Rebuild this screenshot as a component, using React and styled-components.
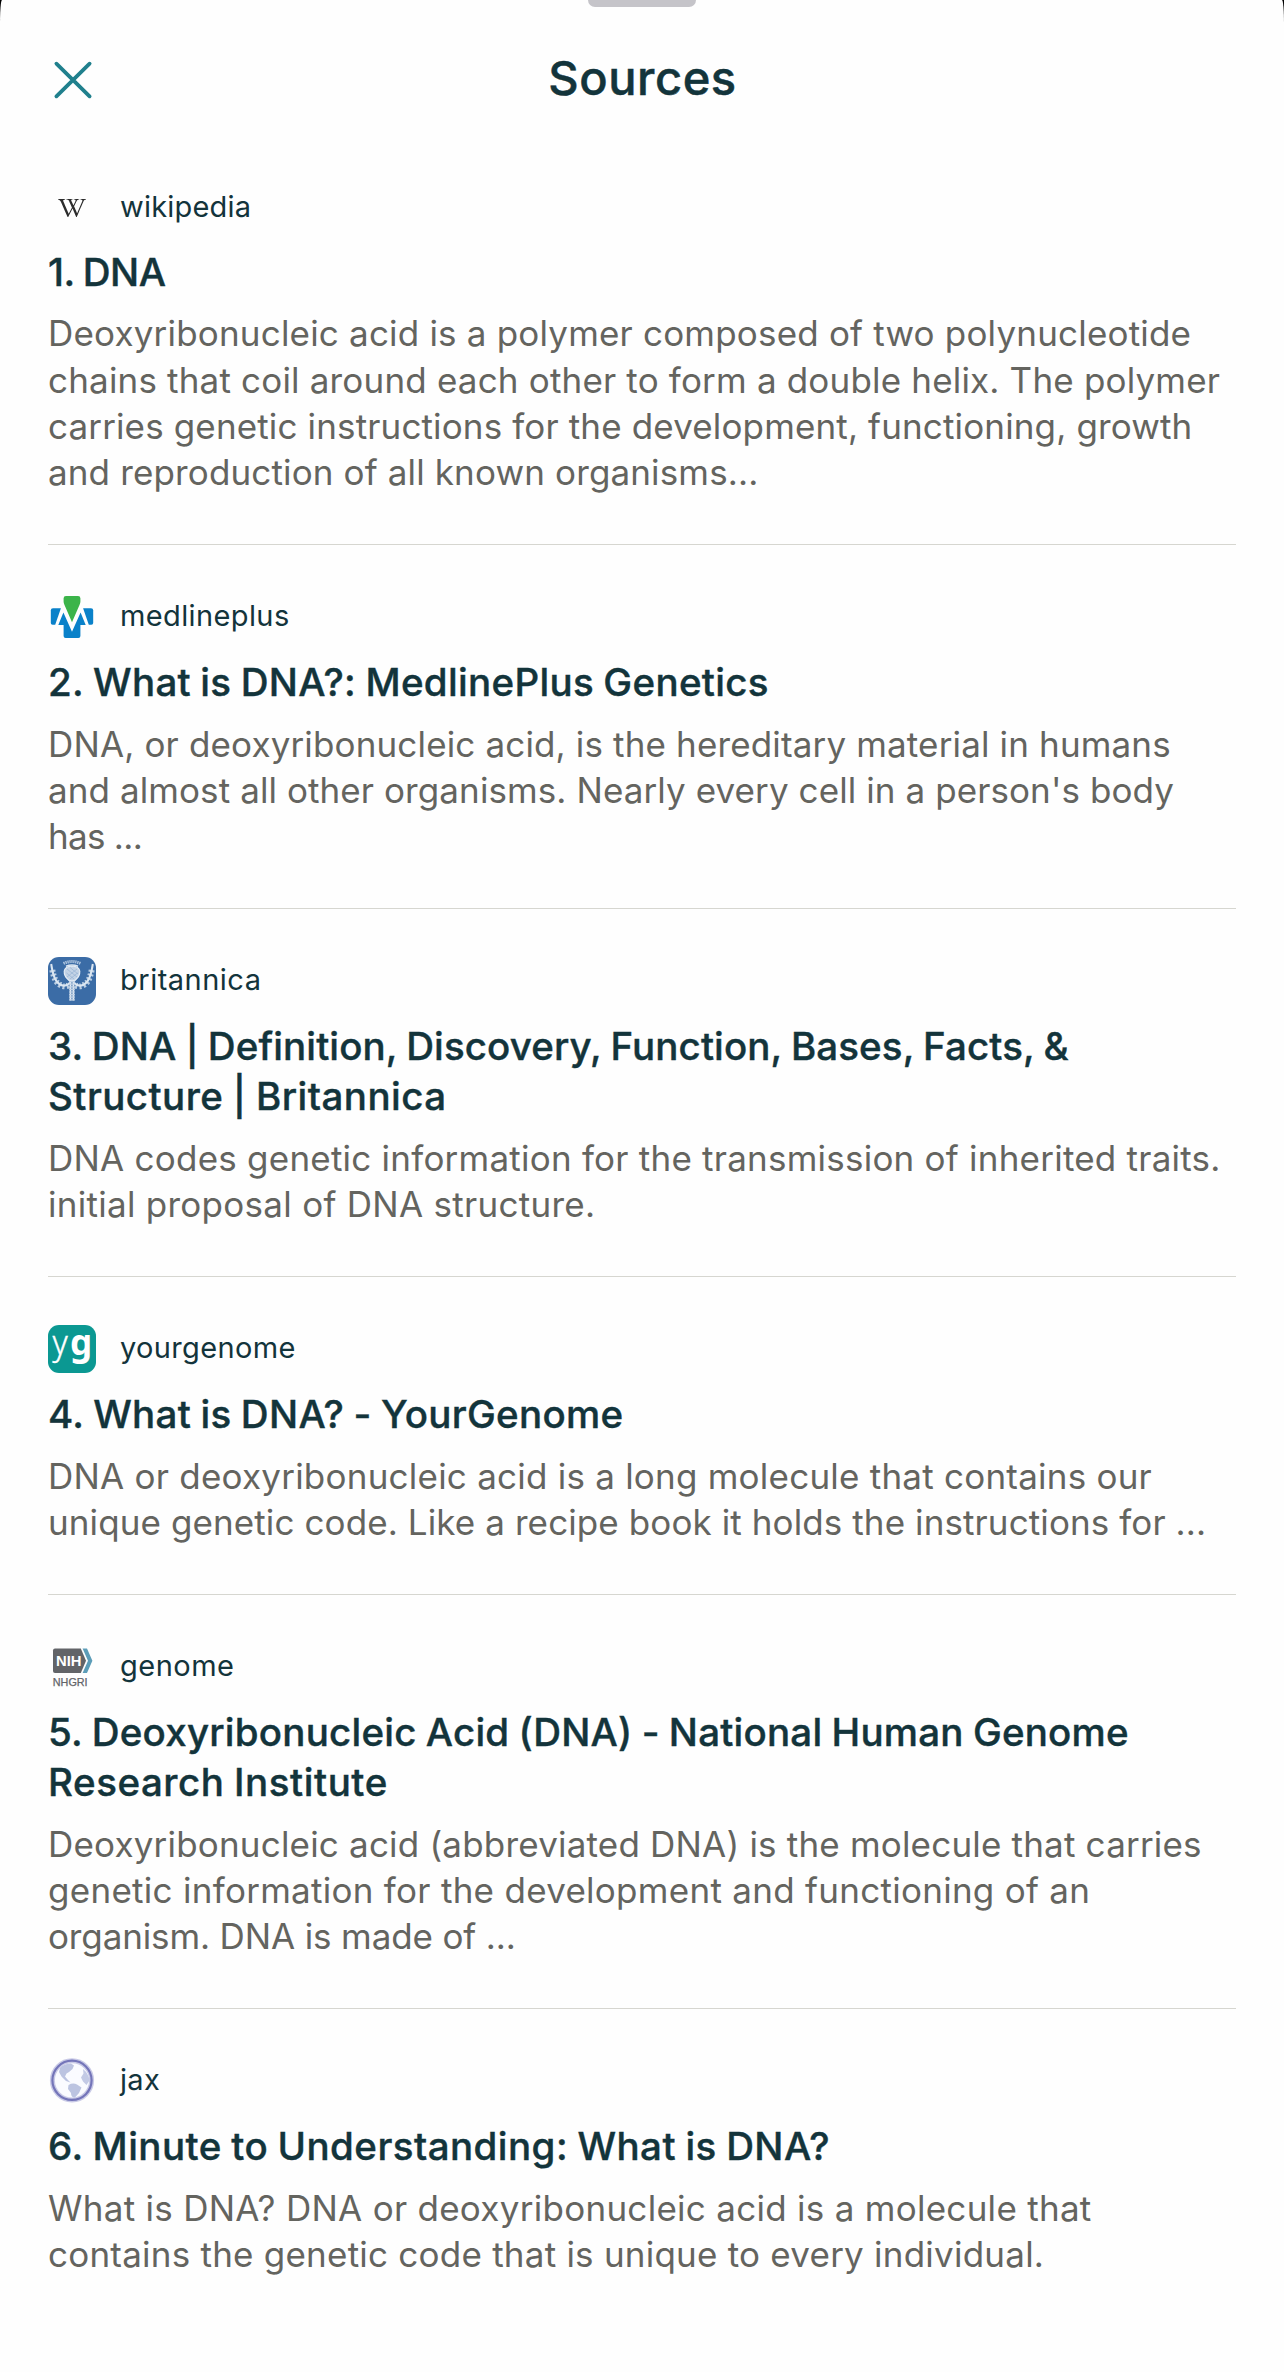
import React from "react";
import styled, { createGlobalStyle } from 'styled-components'
import { FaWikipediaW } from "react-icons/fa";

const GlobalStyle = createGlobalStyle`
    *{
        box-sizing: border-box;
    }
    body{
        margin: 0;
        background: #000;
    }
`
const Sheet = styled.div`
    height: 2372px;
    overflow: hidden;
    background: #fefefe;
    border-top-left-radius: 2px 24px;
    border-top-right-radius: 2px 24px;
    font-family: 'Inter', 'Liberation Sans', sans-serif;
    color: #13343b;
`
const Handle = styled.div`
    width: 108px;
    height: 7px;
    margin: 0 auto;
    border-radius: 0 0 7px 7px;
    background: #c5c4c9;
`
const Header = styled.header`
    display: grid;
    grid-template-columns: 48px 1fr 48px;
    align-items: start;
    height: 126.7px;
    padding: 43px 48px 0;
`
const CloseButton = styled.button`
    display: flex;
    align-items: center;
    justify-content: center;
    width: 49px;
    height: 60px;
    padding: 0;
    border: none;
    background: none;
    cursor: pointer;
`
const Heading = styled.h1`
    margin: 0;
    padding-left: 1px;
    text-align: center;
    font-size: 47px;
    font-weight: 500;
    line-height: 55px;
    letter-spacing: 0.6px;
    -webkit-text-stroke: 0.5px currentColor;
`
const List = styled.ol`
    margin: 0;
    padding: 0 48px;
    list-style: none;
`
const Item = styled.li`
    padding: 48px 0 48.4px;
    border-top: 1px solid ${({ $first }) => ($first ? 'transparent' : '#d6d6d0')};
`
const Site = styled.div`
    display: flex;
    align-items: center;
    gap: 24px;
    height: 48px;
    margin-bottom: 16px;
    padding-top: ${({ $first }) => ($first ? 3 : 0)}px;
`
const Favicon = styled.span`
    display: flex;
    align-items: center;
    justify-content: center;
    flex: none;
    width: 48px;
    height: 48px;
    color: #2c2c2c;

    svg{
        overflow: visible;
    }
`
const SiteName = styled.span`
    padding-bottom: 3px;
    font-size: 29px;
    line-height: 36px;
    letter-spacing: ${({ $track }) => $track}px;
`
const Title = styled.h2`
    margin: 0 0 13.6px;
    font-size: 38.5px;
    font-weight: 500;
    line-height: 50px;
    word-spacing: -1.3px;
    -webkit-text-stroke: 0.4px currentColor;
`
const Snippet = styled.p`
    margin: 0 0 0.3px;
    font-size: 35px;
    line-height: 46.3px;
    color: #64645f;
`
const Line = styled.span`
    display: block;
    white-space: nowrap;
    letter-spacing: ${({ $track }) => $track}px;
`

const CloseIcon = () => (
    <svg width="40" height="40" viewBox="0 0 40 40" stroke="#20808d" strokeWidth="3.8" strokeLinecap="round">
        <path d="M3.4 3.7L36.6 36.3M36.6 3.7L3.4 36.3" />
    </svg>
)

const MedlineIcon = () => (
    <svg width="48" height="48" viewBox="0 0 48 48">
        <g fill="#0a81c9">
            <path d="M5 15.3H12.9L7.2 31.8H4.6Q2.8 31.8 2.8 30V17.5Q2.8 15.3 5 15.3Z" />
            <path d="M43 15.3H35.1L40.8 31.8H43.4Q45.2 31.8 45.2 30V17.5Q45.2 15.3 43 15.3Z" />
            <path d="M10.3 32L15.4 19.5L24 38.8L32.6 19.5L37.7 32H32.4V43Q32.4 45 30.4 45H17.6Q15.6 45 15.6 43V32Z" />
        </g>
        <path fill="#3bb44a" d="M18 3H30Q32.4 3 32.4 5.2V8.5Q32.4 10 31.6 11.8L24 29.2L16.4 11.8Q15.6 10 15.6 8.5V5.2Q15.6 3 18 3Z" />
    </svg>
)

const BritannicaIcon = () => (
    <svg width="48" height="48" viewBox="0 0 48 48" fill="none">
        <rect width="48" height="48" rx="11" fill="#3b6ca6" />
        {/* crown of the thistle */}
        <path d="M15.5 6.5Q24 2.5 32.5 6.5" stroke="#a9c1dd" strokeWidth="3" strokeDasharray="1.4 .6" />
        <path d="M18 9.3Q24 6.8 30 9.3" stroke="#dce7f2" strokeWidth="1.6" />
        <path d="M16.2 14Q17 9.3 24 9Q31 9.3 31.8 14Q32 19 28.4 22L26.5 24H21.5L19.6 22Q16 19 16.2 14Z" fill="#c3d3e6" stroke="#e8eff6" strokeWidth="1.1" />
        <path d="M19 12L29 20M18.5 16L26 22M22 10.5L30 17M29 12L19 20M29.5 16L22 22" stroke="#8fadd0" strokeWidth=".6" />
        {/* leaves */}
        <g stroke="#dbe6f1">
            <path d="M3.2 7Q5.5 24 12 27.5Q18 30.5 22 25.5" strokeWidth="2" />
            <path d="M44.8 7Q42.5 24 36 27.5Q30 30.5 26 25.5" strokeWidth="2" />
            <path d="M4.3 13Q6.5 24.5 11.5 27.5Q17 31 21 28" strokeWidth="6" strokeDasharray="2 2" opacity=".8" />
            <path d="M43.7 13Q41.5 24.5 36.5 27.5Q31 31 27 28" strokeWidth="6" strokeDasharray="2 2" opacity=".8" />
        </g>
        <path d="M22.5 23V43.5M25.4 23V43.5" stroke="#e3ebf4" strokeWidth="1.9" />
        <path d="M24 24V43.5" stroke="#c0d1e5" strokeWidth="5.6" strokeDasharray="1.2 1.4" />
    </svg>
)

const YourGenomeIcon = () => (
    <svg width="48" height="48" viewBox="0 0 48 48" fill="#fff" fontFamily="'Noto Sans', sans-serif" fontSize="35">
        <rect width="48" height="48" rx="11" fill="#0b9892" />
        <text x="4.4" y="30.3" fontWeight="300" stroke="#fff" strokeWidth=".4" textLength="15.2" lengthAdjust="spacingAndGlyphs">y</text>
        <text x="22" y="30.3" fontWeight="700">g</text>
    </svg>
)

const NihIcon = () => (
    <svg width="48" height="48" viewBox="0 0 48 48" fontFamily="'Liberation Sans', sans-serif">
        <path fill="#626468" d="M7 5.5H32.8L38 17.7L32.8 30H7Q5 30 5 28V7.5Q5 5.5 7 5.5Z" />
        <path fill="#5c9db8" d="M34.6 5.5H39L44.4 17.7L39 30H34.6L40 17.7Z" />
        <text x="8" y="23.2" fill="#fff" fontSize="14.5" fontWeight="700" textLength="25.5" lengthAdjust="spacingAndGlyphs">NIH</text>
        <text x="4.8" y="43.2" fill="#626468" stroke="#626468" strokeWidth=".25" fontSize="10.3" textLength="34.8" lengthAdjust="spacingAndGlyphs">NHGRI</text>
    </svg>
)

const GlobeIcon = () => (
    <svg width="48" height="48" viewBox="0 0 48 48">
        <circle cx="24" cy="23.3" r="19.6" fill="#fafbff" stroke="#c9cae6" strokeWidth="5" />
        <circle cx="24" cy="23.3" r="19.6" fill="none" stroke="#7475b9" strokeWidth="2.2" />
        <path fill="#bcc4e1" d="M12 11Q16 6.5 23 6.5L26 8.5L24.5 12L21 15L18.5 16.5L17 19.5L19.5 22.5L22.5 25.5L18 24L13.5 19.5L11 15Z" />
        <path fill="#bcc4e1" d="M20.5 28Q25 25.5 29 27.5L33.5 30.5L31 36L27 40.5Q23 40.5 23 36L20 32Z" />
        <path fill="#c3cae5" d="M35 12Q41 17 41.5 23.5L38.5 28L35 24.5L33 20.5L35.5 16.5Z" />
    </svg>
)

// every line is [text, letter-spacing]
const sources = [
    {
        site: ['wikipedia', 0.2],
        icon: <FaWikipediaW size={28} />,
        title: [['1. DNA', -0.5]],
        snippet: [
            ['Deoxyribonucleic acid is a polymer composed of two polynucleotide', 0.19],
            ['chains that coil around each other to form a double helix. The polymer', 0.18],
            ['carries genetic instructions for the development, functioning, growth', 0.14],
            ['and reproduction of all known organisms...', 0.14],
        ],
    },
    {
        site: ['medlineplus', 0.38],
        icon: <MedlineIcon />,
        title: [['2. What is DNA?: MedlinePlus Genetics', 0.33]],
        snippet: [
            ['DNA, or deoxyribonucleic acid, is the hereditary material in humans', 0.15],
            ["and almost all other organisms. Nearly every cell in a person's body", 0.09],
            ['has ...', -0.7],
        ],
    },
    {
        site: ['britannica', 0.5],
        icon: <BritannicaIcon />,
        title: [
            ['3. DNA | Definition, Discovery, Function, Bases, Facts, &', 0.1],
            ['Structure | Britannica', 0.46],
        ],
        snippet: [
            ['DNA codes genetic information for the transmission of inherited traits.', 0.23],
            ['initial proposal of DNA structure.', 0.28],
        ],
    },
    {
        site: ['yourgenome', 0.35],
        icon: <YourGenomeIcon />,
        title: [['4. What is DNA? - YourGenome', 0.32]],
        snippet: [
            ['DNA or deoxyribonucleic acid is a long molecule that contains our', 0.23],
            ['unique genetic code. Like a recipe book it holds the instructions for ...', 0.1],
        ],
    },
    {
        site: ['genome', 0.5],
        icon: <NihIcon />,
        title: [
            ['5. Deoxyribonucleic Acid (DNA) - National Human Genome', 0.22],
            ['Research Institute', 0.55],
        ],
        snippet: [
            ['Deoxyribonucleic acid (abbreviated DNA) is the molecule that carries', 0.19],
            ['genetic information for the development and functioning of an', 0.28],
            ['organism. DNA is made of ...', -0.13],
        ],
    },
    {
        site: ['jax', 0.3],
        icon: <GlobeIcon />,
        title: [['6. Minute to Understanding: What is DNA?', 0.45]],
        snippet: [
            ['What is DNA? DNA or deoxyribonucleic acid is a molecule that', 0.28],
            ['contains the genetic code that is unique to every individual.', 0.23],
        ],
    },
]

const Lines = ({ lines }) => lines.map(([text, track]) => (
    <Line key={text} $track={track}>{text} </Line>
))

const Source = ({ source, first }) => (
    <Item $first={first}>
        <Site $first={first}>
            <Favicon>{source.icon}</Favicon>
            <SiteName $track={source.site[1]}>{source.site[0]}</SiteName>
        </Site>
        <Title><Lines lines={source.title} /></Title>
        <Snippet><Lines lines={source.snippet} /></Snippet>
    </Item>
)

const App = () => {
    return (
        <>
            <GlobalStyle />
            <Sheet>
                <Handle />
                <Header>
                    <CloseButton aria-label="Close">
                        <CloseIcon />
                    </CloseButton>
                    <Heading>Sources</Heading>
                </Header>
                <List>
                    {sources.map((source, i) => (
                        <Source key={source.site[0]} source={source} first={i === 0} />
                    ))}
                </List>
            </Sheet>
        </>
    );
}

export default App;
